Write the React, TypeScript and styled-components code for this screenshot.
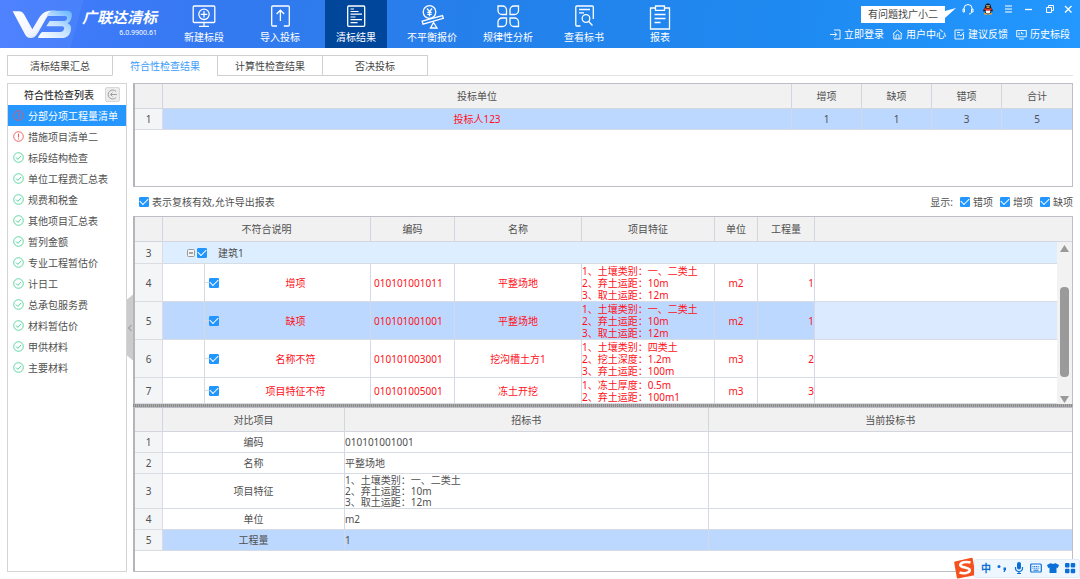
import React from 'react';
import styled, { createGlobalStyle } from 'styled-components';

const Global = createGlobalStyle`
  * { box-sizing: border-box; }
  body {
    margin: 0;
    background: #fff;
    color: #505050;
    font: 10px/14px "Noto Sans", "Noto Sans CJK SC", sans-serif;
  }
  button { font: inherit; color: inherit; border: 0; padding: 0; background: none; cursor: pointer; }
  a { color: inherit; text-decoration: none; }
  svg { display: block; flex: none; }
`;

const Page = styled.div`
  min-height: 100vh;
  display: flex;
  flex-direction: column;
`;

/* ---------- top bar ---------- */

const TopBar = styled.header`
  height: 48px;
  display: flex;
  color: #fff;
  background:
    linear-gradient(105deg, rgba(255, 255, 255, 0.05) 80px, transparent 81px),
    linear-gradient(97deg, #457bff 0%, #3479f0 20%, #2480ea 45%, #1e8bf2 75%, #2398ff 100%);
`;

const Brand = styled.div`
  width: 173px;
  flex: none;
  display: flex;
  gap: 9px;
  padding: 10px 0 0 12px;
`;

const BrandText = styled.div`
  display: flex;
  flex-direction: column;
  align-items: flex-end;
`;

const BrandName = styled.h1`
  margin: 0;
  font-size: 15px;
  line-height: 15px;
  font-weight: 700;
  font-style: italic;
  white-space: nowrap;
`;

const Version = styled.span`
  font-size: 7px;
  line-height: 15px;
`;

const Tools = styled.nav`
  display: flex;
  gap: 14px;
`;

const Tool = styled.button<{ $active?: boolean }>`
  width: 62px;
  display: flex;
  flex-direction: column;
  align-items: center;
  padding-top: 4px;
  white-space: nowrap;
  background: ${p => (p.$active ? '#00479b' : 'transparent')};
  span { line-height: 14px; }
`;

const UserArea = styled.div`
  margin-left: auto;
  padding: 0 6px 0 0;
  display: flex;
  flex-direction: column;
  align-items: flex-end;
`;

const WindowRow = styled.div`
  height: 25px;
  display: flex;
  align-items: flex-start;
  gap: 8px;
  padding-top: 3px;
`;

const Bubble = styled.div`
  position: relative;
  margin: 3px 9px 0 0;
  width: 84px;
  height: 17px;
  line-height: 17px;
  text-align: center;
  color: #444;
  background: #fff;
  &::after {
    content: '';
    position: absolute;
    left: 100%;
    top: 2px;
    width: 11px;
    height: 10px;
    background: #fff;
    clip-path: polygon(0 30%, 100% 0, 0 100%);
  }
`;

const WindowButton = styled.button`
  width: 12px;
  height: 12px;
`;

const UserLinks = styled.div`
  display: flex;
  gap: 8px;
  padding: 2px 4px 0 0;
`;

const UserLink = styled.a`
  display: flex;
  align-items: center;
  gap: 3px;
  white-space: nowrap;
`;

/* ---------- tabs ---------- */

const Tabs = styled.div`
  display: flex;
  margin: 7px 7px 0;
  &::after { content: ''; flex: 1; border-bottom: 1px solid #e4e4e4; }
`;

const Tab = styled.button<{ $active?: boolean }>`
  width: 106px;
  height: 21px;
  margin-right: -1px;
  border: 1px solid #d0d0d0;
  border-bottom-color: ${p => (p.$active ? '#fff' : '#d0d0d0')};
  color: ${p => (p.$active ? '#3a9cfa' : '#444')};
  &:last-child { margin-right: 0; }
`;

/* ---------- body ---------- */

const Body = styled.div`
  flex: 1;
  display: flex;
  padding: 7px 7px 7px;
`;

const Sidebar = styled.aside`
  width: 120px;
  flex: none;
  border: 1px solid #d4d4d4;
`;

const SidebarHead = styled.div`
  height: 21px;
  display: flex;
  align-items: center;
  padding: 0 6px 0 16px;
  justify-content: space-between;
  font-weight: 500;
  color: #333;
`;

const FoldButton = styled.button`
  width: 15px;
  height: 15px;
  border: 1px solid #d8d8d8;
  border-radius: 2px;
  background: #ececec;
`;

const CheckItem = styled.button<{ $active?: boolean }>`
  width: 100%;
  height: 21px;
  display: flex;
  align-items: center;
  gap: 4px;
  padding-left: 5px;
  white-space: nowrap;
  color: ${p => (p.$active ? '#fff' : '#505050')};
  background: ${p => (p.$active ? '#2597ff' : 'transparent')};
`;

const Gutter = styled.div`
  width: 6px;
  flex: none;
  display: flex;
  align-items: center;
`;

const Collapse = styled.button`
  width: 6px;
  height: 66px;
  background: #cbcbcb;
  clip-path: polygon(0 5px, 100% 0, 100% 100%, 0 61px);
`;

const Main = styled.main`
  flex: 1;
  min-width: 0;
  display: flex;
  flex-direction: column;
`;

const Panel = styled.section<{ $grow?: boolean; $min?: number; $open?: boolean }>`
  position: relative;
  flex: ${p => (p.$grow ? '1' : 'none')};
  min-height: ${p => p.$min ?? 0}px;
  border: 1px solid #bdbec6;
  border-left: 2px solid #b4b4ba;
  border-bottom-width: ${p => (p.$open ? 0 : 1)}px;
`;

const Grid = styled.table`
  width: 100%;
  table-layout: fixed;
  border-collapse: separate;
  border-spacing: 0;
`;

const Row = styled.tr<{ $h: number; $tone?: string }>`
  height: ${p => p.$h}px;
  background: ${p => p.$tone ?? '#fff'};
`;

const Head = styled.th`
  padding: 0;
  font-weight: 400;
  background: #f1f1f1;
  border-right: 1px solid #d3d6de;
  border-bottom: 1px solid #d3d6de;
  &:last-child { border-right: 0; }
`;

const Num = styled.th`
  padding: 0;
  font-weight: 400;
  background: #f3f5f7;
  border-right: 1px solid #d9dce2;
  border-bottom: 1px solid #d9dce2;
`;

const Cell = styled.td<{ $align?: 'left' | 'right'; $red?: boolean; $tone?: string; $tight?: boolean }>`
  padding: 0;
  height: inherit;
  text-align: ${p => p.$align ?? 'center'};
  color: ${p => (p.$red ? '#ff1020' : 'inherit')};
  background: ${p => p.$tone ?? 'transparent'};
  line-height: ${p => (p.$tight ? 11 : 12)}px;
  white-space: pre-line;
  border-right: 1px solid #d3d9e8;
  border-bottom: 1px solid #d6dbe4;
  &:last-child { border-right: 0; }
`;

const Code = styled.span`
  padding-left: 3px;
`;

const Tick = styled.input.attrs({ type: 'checkbox' })`
  appearance: none;
  flex: none;
  display: grid;
  place-items: center;
  width: 10px;
  height: 10px;
  margin: 0;
  border-radius: 1px;
  background: #fff;
  border: 1px solid #2196ff;
  &:checked { background: #2196ff; }
  &:checked::after {
    content: '';
    width: 7px;
    height: 4px;
    margin-bottom: 2px;
    border: solid #fff;
    border-width: 0 0 1px 1px;
    transform: rotate(-45deg);
  }
`;

const OptionBar = styled.div`
  height: 29px;
  display: flex;
  align-items: center;
  justify-content: space-between;
  padding-left: 6px;
`;

const Option = styled.label`
  display: flex;
  align-items: center;
  gap: 3px;
`;

const Filters = styled.div`
  display: flex;
  align-items: center;
  gap: 7px;
`;

const GroupCell = styled.div`
  display: flex;
  align-items: center;
  gap: 2px;
  padding-left: 24px;
`;

const GroupLabel = styled.label`
  display: flex;
  align-items: center;
  gap: 11px;
`;

const ItemCell = styled.label`
  height: 100%;
  display: flex;
  align-items: center;
  margin-left: 41px;
  border-left: 1px solid #d6d9de;
  &::before { content: ''; width: 4px; border-top: 1px solid #d6d9de; }
  span { flex: 1; padding-left: 2px; }
`;

const ScrollTrack = styled.div`
  position: absolute;
  top: 25px;
  right: 0;
  bottom: 0;
  width: 15px;
  display: flex;
  flex-direction: column;
  align-items: center;
  background: #f2f2f2;
  padding: 2px 0 0;
`;

const Thumb = styled.div`
  width: 9px;
  height: 90px;
  margin: 35px 0 auto;
  border-radius: 4px;
  background: #9a9a9a;
`;

const Splitter = styled.div`
  height: 3px;
  background: repeating-linear-gradient(90deg, #8c8c8c 0 1px, #adadad 1px 2px);
`;

const Ime = styled.div`
  position: fixed;
  right: 0;
  bottom: 0;
  height: 22px;
  display: flex;
  align-items: center;
  gap: 5px;
`;

const ImeKeys = styled.div`
  height: 19px;
  display: flex;
  align-items: center;
  gap: 5px;
  padding: 0 3px 0 6px;
  margin-left: -7px;
  color: #0a6fd6;
  background: #eef6ff;
  border: 1px solid #e0ecfa;
  border-radius: 2px;
  font-weight: 700;
`;

/* ---------- icons ---------- */

const Line = ({ children, w = 24, h = 26, sw = 1.3 }: { children: React.ReactNode; w?: number; h?: number; sw?: number }) => (
  <svg width={w} height={h} viewBox={`0 0 ${w} ${h}`} fill="none" stroke="currentColor" strokeWidth={sw} aria-hidden>
    {children}
  </svg>
);

const toolIcons = [
  <Line key="new"><rect x="1.2" y="2" width="21.6" height="16.5" rx="1" /><circle cx="12" cy="10.3" r="5.2" /><path d="M12 7v6.600M8.700 10.300h6.600M12 18.500v3.500M7 22.300h10" /></Line>,
  <Line key="import"><path d="M9 22H4.700a1 1 0 0 1-1-1V3a1 1 0 0 1 1-1h15.600a1 1 0 0 1 1 1v18a1 1 0 0 1-1 1h-4.500M12.400 17V6.500M8.600 10l3.800-3.800 3.800 3.800" /></Line>,
  <Line key="result"><rect x="3.700" y="2" width="17" height="20.300" rx="1" /><path d="M6.500 5H10M6.500 7.500h8M6.500 10.200h11.500M6.500 13h5M6.500 15.700h11.500M6.500 18.700h7" strokeWidth="1.200" /></Line>,
  <Line key="scale"><circle cx="9.500" cy="8" r="6.300" /><path d="M7 4.500l2.500 3.200L12 4.500M9.500 7.700v4.500M7.300 8.300h4.400M7.300 10.300h4.400M2.200 17.200L22.500 11.600l.8 2.700L3 20.200zM13.500 18.500l-3 5.500h6.500z" /></Line>,
  <Line key="petals"><path d="M2 2h4.500a4 4 0 0 1 4 4v4.500H6a4 4 0 0 1-4-4zM22.500 2H18a4 4 0 0 0-4 4v4.500h4.500a4 4 0 0 0 4-4zM2 22.500h4.500a4 4 0 0 0 4-4V14H6a4 4 0 0 0-4 4zM22.500 22.500H18a4 4 0 0 1-4-4V14h4.500a4 4 0 0 1 4 4z" /></Line>,
  <Line key="view"><path d="M8.500 22H4.800a1 1 0 0 1-1-1V3a1 1 0 0 1 1-1h15.500a1 1 0 0 1 1 1v12M7 5.500h11M7 8.800h5" /><circle cx="14" cy="14.500" r="3.800" /><path d="M16.700 17.500l3.800 4" /></Line>,
  <Line key="report"><path d="M7.500 4H2.500v21h19V4h-5" /><path d="M7.500 2h9v4.300h-9zM6.500 10.500h11M6.500 14.500h11M6.500 18.500h6" /></Line>,
];

const Logo = () => (
  <svg width="61" height="30" viewBox="0 0 183 90" aria-label="VB">
    <defs>
      <linearGradient id="v" x1="0" y1="0" x2="1" y2="1"><stop offset="0" stopColor="#fff" /><stop offset=".6" stopColor="#f2f6ff" /><stop offset="1" stopColor="#b9d2ff" /></linearGradient>
      <linearGradient id="b" x1="1" y1="0" x2="0" y2="1"><stop offset="0" stopColor="#5fb2ff" /><stop offset=".45" stopColor="#c3e0ff" /><stop offset="1" stopColor="#fff" /></linearGradient>
    </defs>
    <path d="M2 4h18c8 0 12 3 16 9l25 45 20-34C91 8 101 2 116 2h16c-14 3-22 10-29 22L78 68c-7 12-14 16-22 16-9 0-14-5-18-13z" fill="url(#v)" />
    <path d="M118 2h46c14 0 18 8 15 19-2 9-6 16-12 19 7 3 12 9 10 19-3 16-12 25-27 25H82c-3 0-5-1-3-4l7-10c2-3 4-4 8-4h50c7 0 11-3 12-8 2-6-1-9-7-9h-46l10-16h40c7 0 11-3 12-7 1-5-1-8-7-8h-53c3-9 7-14 13-16z" fill="url(#b)" />
  </svg>
);

const Status = ({ ok }: { ok: boolean }) => (
  <svg width="11" height="11" viewBox="0 0 11 11" fill="none" stroke={ok ? '#4fd39b' : '#f25555'} aria-hidden>
    <circle cx="5.500" cy="5.500" r="4.800" strokeWidth=".9" />
    {ok ? <path d="M3 5.500l1.900 1.900L8.200 3.900" /> : <path d="M5.500 2.600v3.800M5.500 7.400v1" />}
  </svg>
);

const Penguin = () => (
  <svg width="12" height="12" viewBox="0 0 12 12" aria-hidden>
    <ellipse cx="3.800" cy="10.800" rx="2" ry="1" fill="#f5a623" /><ellipse cx="8.200" cy="10.800" rx="2" ry="1" fill="#f5a623" />
    <path d="M6 .5c2 0 3 1.500 3 3.500 1 1.500 2 3 1.700 4.500-.5.300-1-.3-1.200-.8C9.200 9.800 8 11 6 11S2.800 9.800 2.500 7.700c-.2.500-.7 1.100-1.200.8C1 7 2 5.500 3 4 3 2 4 .5 6 .5z" fill="#161616" />
    <ellipse cx="6" cy="8.400" rx="2.300" ry="2.200" fill="#fff" />
    <path d="M2.500 5c2 1 5 1 7 0l.3 1.900c-2.200 1-5.400 1-7.600 0z" fill="#e6342a" />
    <circle cx="5" cy="2.700" r=".7" fill="#fff" /><circle cx="7" cy="2.700" r=".7" fill="#fff" />
    <ellipse cx="6" cy="4.200" rx="1.700" ry=".7" fill="#f5a623" />
  </svg>
);

/* ---------- data ---------- */

const tools = ['新建标段', '导入投标', '清标结果', '不平衡报价', '规律性分析', '查看标书', '报表'];
const tabs = ['清标结果汇总', '符合性检查结果', '计算性检查结果', '否决投标'];
const checks = ['分部分项工程量清单', '措施项目清单二', '标段结构检查', '单位工程费汇总表', '规费和税金', '其他项目汇总表', '暂列金额', '专业工程暂估价', '计日工', '总承包服务费', '材料暂估价', '甲供材料', '主要材料'];

const userLinks = [
  { text: '立即登录', icon: <path d="M4 1h6v9H4M0 5.500h6.500M4.500 3.200l2.300 2.300-2.300 2.300" /> },
  { text: '用户中心', icon: <path d="M.8 5L5.500 1l4.700 4M1.800 4.500V10h7.400V4.500M4 10V7a1.500 1.500 0 0 1 3 0v3" /> },
  { text: '建议反馈', icon: <path d="M9.500 5v5H1V1h8.500M3 3.500h3M3 6h2.500M5.500 5.500L7 7l3-4" /> },
  { text: '历史标段', icon: <path d="M.7 1.500h9.600v6.300H.7zM3 10h5M3 3.500v2.600M5.500 3v1.800h2" /> },
];

const items = [
  { n: 4, h: 38, name: '增项', code: '010101001011', title: '平整场地', spec: '1、土壤类别：一、二类土\n2、弃土运距：10m\n3、取土运距：12m', unit: 'm2', qty: 1 },
  { n: 5, h: 38, name: '缺项', code: '010101001001', title: '平整场地', spec: '1、土壤类别：一、二类土\n2、弃土运距：10m\n3、取土运距：12m', unit: 'm2', qty: 1, on: true },
  { n: 6, h: 38, name: '名称不符', code: '010101003001', title: '挖沟槽土方1', spec: '1、土壤类别：四类土\n2、挖土深度：1.2m\n3、弃土运距：100m', unit: 'm3', qty: 2 },
  { n: 7, h: 26, name: '项目特征不符', code: '010101005001', title: '冻土开挖', spec: '1、冻土厚度：0.5m\n2、弃土运距：100m1', unit: 'm3', qty: 3 },
];

const compare = [
  { h: 21, name: '编码', value: '010101001001' },
  { h: 21, name: '名称', value: '平整场地' },
  { h: 35, name: '项目特征', value: '1、土壤类别：一、二类土\n2、弃土运距：10m\n3、取土运距：12m' },
  { h: 21, name: '单位', value: 'm2' },
  { h: 21, name: '工程量', value: '1', on: true },
];

const SELECTED = '#bcd8ff';

const Columns = ({ widths }: { widths: (number | null)[] }) => (
  <colgroup>{widths.map((w, i) => <col key={i} width={w ?? undefined} />)}</colgroup>
);

export default function App() {
  return (
    <Page>
      <Global />
      <TopBar>
        <Brand>
          <Logo />
          <BrandText>
            <BrandName>广联达清标</BrandName>
            <Version>6.0.9900.61</Version>
          </BrandText>
        </Brand>
        <Tools>
          {tools.map((t, i) => (
            <Tool key={t} $active={i === 2}>{toolIcons[i]}<span>{t}</span></Tool>
          ))}
        </Tools>
        <UserArea>
          <WindowRow>
            <Bubble>有问题找广小二</Bubble>
            <WindowButton aria-label="客服"><Line w={12} h={12} sw={1}><path d="M2 7V5.500a4 4 0 0 1 8 0V7M2 6H1v3h1.500V6zM10 6h1v3H9.500V6zM9.500 9c0 1.500-1 2-2.500 2" /></Line></WindowButton>
            <WindowButton aria-label="QQ"><Penguin /></WindowButton>
            <WindowButton aria-label="菜单"><Line w={12} h={12} sw={1.2}><path d="M3 3h7M3 6h7M3 9h7" /></Line></WindowButton>
            <WindowButton aria-label="最小化"><Line w={12} h={12}><path d="M3 6.500h7" /></Line></WindowButton>
            <WindowButton aria-label="还原"><Line w={12} h={12} sw={1}><path d="M4.500 4.500h5v5h-5zM6.500 4.500v-2h5v5h-2" /></Line></WindowButton>
            <WindowButton aria-label="关闭"><Line w={12} h={12}><path d="M3 3l6.500 6.500M9.500 3L3 9.500" /></Line></WindowButton>
          </WindowRow>
          <UserLinks>
            {userLinks.map(l => (
              <UserLink key={l.text} href="#"><Line w={11} h={11} sw={0.9}>{l.icon}</Line>{l.text}</UserLink>
            ))}
          </UserLinks>
        </UserArea>
      </TopBar>

      <Tabs>
        {tabs.map((t, i) => <Tab key={t} $active={i === 1}>{t}</Tab>)}
      </Tabs>

      <Body>
        <Sidebar>
          <SidebarHead>
            符合性检查列表
            <FoldButton aria-label="收起列表"><Line w={13} h={13} sw={0.9}><path d="M10 3.500a4.500 4.500 0 1 0 0 6M11 6.500H4.500M6.500 4.500l-2 2 2 2" stroke="#999" /></Line></FoldButton>
          </SidebarHead>
          {checks.map((c, i) => (
            <CheckItem key={c} $active={i === 0}><Status ok={i > 1} />{c}</CheckItem>
          ))}
        </Sidebar>
        <Gutter>
          <Collapse aria-label="折叠"><Line w={6} h={8} sw={1}><path d="M4.500 1L1.500 4l3 3" stroke="#888" /></Line></Collapse>
        </Gutter>
        <Main>
          <Panel $min={104}>
            <Grid>
              <Columns widths={[28, null, 70, 70, 70, 70]} />
              <thead>
                <Row $h={25}><Head /><Head>投标单位</Head><Head>增项</Head><Head>缺项</Head><Head>错项</Head><Head>合计</Head></Row>
              </thead>
              <tbody>
                <Row $h={21} $tone={SELECTED}><Num>1</Num><Cell $red>投标人123</Cell><Cell>1</Cell><Cell>1</Cell><Cell>3</Cell><Cell>5</Cell></Row>
              </tbody>
            </Grid>
          </Panel>

          <OptionBar>
            <Option><Tick defaultChecked />表示复核有效,允许导出报表</Option>
            <Filters>
              <span>显示:</span>
              {['错项', '增项', '缺项'].map(f => <Option key={f}><Tick defaultChecked />{f}</Option>)}
            </Filters>
          </OptionBar>

          <Panel $open>
            <Grid>
              <Columns widths={[28, 208, 84, 127, 133, 43, 57, null]} />
              <thead>
                <Row $h={25}><Head /><Head>不符合说明</Head><Head>编码</Head><Head>名称</Head><Head>项目特征</Head><Head>单位</Head><Head>工程量</Head><Head /></Row>
              </thead>
              <tbody>
                <Row $h={22} $tone="#dceeff">
                  <Num>3</Num>
                  <Cell $align="left" colSpan={7}>
                    <GroupCell>
                      <Line w={8} h={8} sw={1}><rect x=".5" y=".5" width="7" height="7" rx="1" stroke="#999" fill="#f4f4f4" /><path d="M2 4h4" stroke="#555" /></Line>
                      <GroupLabel><Tick defaultChecked />建筑1</GroupLabel>
                    </GroupCell>
                  </Cell>
                </Row>
                {items.map(r => (
                  <Row key={r.n} $h={r.h} $tone={r.on ? SELECTED : undefined}>
                    <Num>{r.n}</Num>
                    <Cell $red><ItemCell><Tick defaultChecked /><span>{r.name}</span></ItemCell></Cell>
                    <Cell $red $align="left"><Code>{r.code}</Code></Cell>
                    <Cell $red>{r.title}</Cell>
                    <Cell $red $align="left">{r.spec}</Cell>
                    <Cell $red>{r.unit}</Cell>
                    <Cell $red $align="right">{r.qty}</Cell>
                    <Cell $tone={r.on ? '#dceaff' : undefined} />
                  </Row>
                ))}
              </tbody>
            </Grid>
            <ScrollTrack>
              <svg width="9" height="8" viewBox="0 0 9 8"><path d="M4.500 1L9 8H0z" fill="#9a9a9a" /></svg>
              <Thumb />
              <svg width="9" height="8" viewBox="0 0 9 8"><path d="M4.500 7L9 0H0z" fill="#9a9a9a" /></svg>
            </ScrollTrack>
          </Panel>

          <Splitter />

          <Panel $grow>
            <Grid>
              <Columns widths={[28, 182, null, null]} />
              <thead>
                <Row $h={24}><Head /><Head>对比项目</Head><Head>招标书</Head><Head>当前投标书</Head></Row>
              </thead>
              <tbody>
                {compare.map((r, i) => (
                  <Row key={r.name} $h={r.h} $tone={r.on ? SELECTED : undefined}>
                    <Num>{i + 1}</Num>
                    <Cell>{r.name}</Cell>
                    <Cell $align="left" $tight>{r.value}</Cell>
                    <Cell />
                  </Row>
                ))}
              </tbody>
            </Grid>
          </Panel>
        </Main>
      </Body>

      <Ime>
        <svg width="23" height="22" viewBox="0 0 23 22">
          <path d="M2 4.500L18.500.800a1 1 0 0 1 1.200.8L22.300 17a1 1 0 0 1-.8 1.200L5 21.400a1 1 0 0 1-1.200-.8L1.200 5.700A1 1 0 0 1 2 4.500z" fill="#f4511e" />
          <path d="M17.500 5.500C13 4.300 7.500 5.300 7.300 8c-.2 3 9.700 2 9.500 5.200-.2 2.800-6 3.800-10.300 2.300" fill="none" stroke="#fff" strokeWidth="2.600" />
        </svg>
        <ImeKeys>
          <span>中</span>
          <svg width="12" height="12" viewBox="0 0 12 12" fill="currentColor"><circle cx="3" cy="4.500" r="1.500" /><path d="M7.500 5.500h2.500v2.200L8.500 10H7.300l.9-2h-.7z" /></svg>
          <svg width="12" height="12" viewBox="0 0 12 12" fill="currentColor"><rect x="4" y="0" width="4" height="7.500" rx="2" /><path d="M2.500 5v1a3.500 3.500 0 0 0 7 0V5M6 9.500v2M4 11.500h4" fill="none" stroke="currentColor" strokeWidth="1.200" /></svg>
          <svg width="12" height="12" viewBox="0 0 12 12" fill="none" stroke="currentColor"><rect x=".7" y="2" width="10.600" height="8" rx="1" strokeWidth="1.200" /><path d="M2.500 4.500h7M2.500 6.200h7" strokeDasharray="1 .7" /><path d="M3.500 8.200h5" /></svg>
          <svg width="12" height="12" viewBox="0 0 12 12" fill="currentColor"><path d="M4 1c.6 1.200 3.400 1.200 4 0l4 2-1.200 3L9.500 5.500V11h-7V5.500L1.200 6 0 3z" /></svg>
          <svg width="12" height="12" viewBox="0 0 12 12" fill="currentColor"><rect x="1" y="1" width="4.500" height="4.500" rx="1" /><rect x="6.700" y="1" width="4.500" height="4.500" rx="1" /><rect x="1" y="6.700" width="4.500" height="4.500" rx="1" /><rect x="6.700" y="6.700" width="4.500" height="4.500" rx="1" /></svg>
        </ImeKeys>
      </Ime>
    </Page>
  );
}
